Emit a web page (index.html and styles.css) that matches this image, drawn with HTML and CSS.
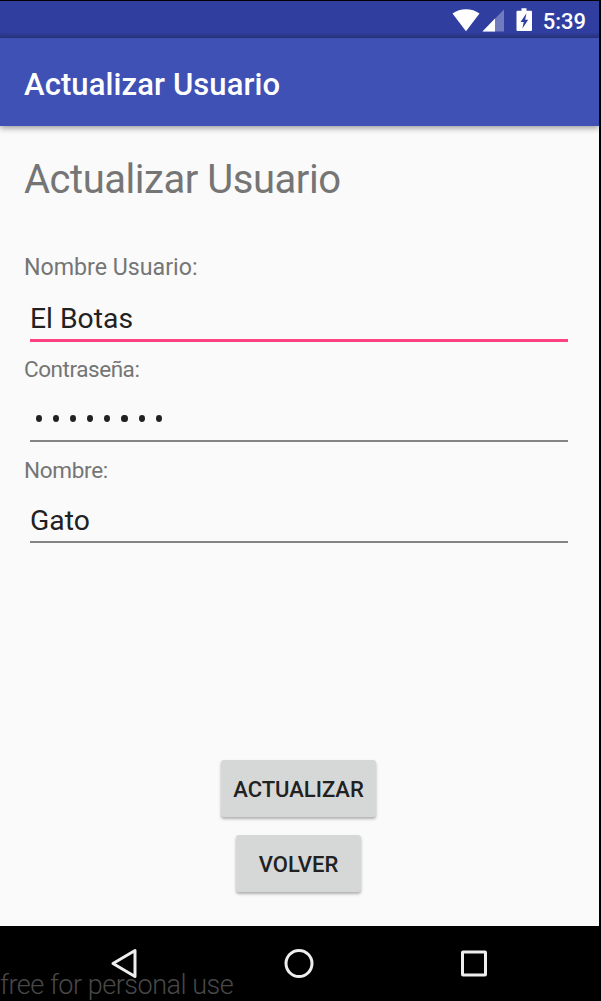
FILE: index.html
```html
<!DOCTYPE html>
<html lang="es">
<head>
<meta charset="utf-8">
<title>Actualizar Usuario</title>
<link rel="stylesheet" href="styles.css">
</head>
<body>
<div class="device">
  <header class="status">
    <svg class="status-icons" width="84" height="26" viewBox="0 0 84 26">
      <path fill="#fff" d="M0.5 12.6C8 6.8 20 6.8 27.5 12.6L14 30.3Z"/>
      <path fill="#727bbd" d="M52 8.500V30.500H30.500Z"/>
      <path fill="#fff" d="M43 17.500V30.500H30.500Z"/>
      <path fill="#fff" fill-rule="evenodd" d="M69.500 7.300h5v2.500h4.500q1 0 1 1V29q0 1-1 1h-13.500q-1 0-1-1V10.800q0-1 1-1h4zM74.500 12.300l-6 8.800h3.200l-1.300 6.500l5.800-8.800h-3z"/>
    </svg>
    <span class="clock">5:39</span>
  </header>
  <div class="appbar"><span class="appbar-title">Actualizar Usuario</span></div>
  <main class="content">
    <h1 class="heading">Actualizar Usuario</h1>
    <form class="form">
      <div class="label label-user">Nombre Usuario:</div>
      <div class="field field-active"><span class="value-user">El Botas</span></div>
      <div class="label label-pass">Contraseña:</div>
      <div class="field field-pass"><span class="dots"><i></i><i></i><i></i><i></i><i></i><i></i><i></i><i></i></span></div>
      <div class="label label-name">Nombre:</div>
      <div class="field field-name"><span class="value-name">Gato</span></div>
    </form>
    <div class="actions">
      <button class="btn btn-update"><span>ACTUALIZAR</span></button>
      <button class="btn btn-back"><span>VOLVER</span></button>
    </div>
  </main>
  <nav class="nav">
    <svg width="32" height="32" viewBox="0 0 32 32"><path d="M27 3.500V29.500L5 16.500Z"/></svg>
    <svg width="32" height="32" viewBox="0 0 32 32"><circle cx="16" cy="16.500" r="13"/></svg>
    <svg width="32" height="32" viewBox="0 0 32 32"><rect x="4.500" y="5" width="23" height="23" rx=".5"/></svg>
    <span class="watermark">free for personal use</span>
  </nav>
</div>
</body>
</html>
```
FILE: styles.css
```css
* { box-sizing: border-box; }
body { margin: 0; background: #000; font-family: Roboto, sans-serif; }
.device { width: 601px; height: 1001px; padding: 1px 2px 0 0; display: flex; flex-direction: column; overflow: hidden; }
.status { height: 37px; background: linear-gradient(#303f9f 0 31px, #2a3583 37px); display: flex; justify-content: flex-end; padding-right: 13px; }
.status-icons { overflow: visible; margin-right: 7px; }
.clock { font-size: 22px; font-weight: 500; line-height: 41px; color: #fff; }
.appbar { height: 88px; background: #3f51b5; display: flex; align-items: center; padding: 5px 0 0 24px; box-shadow: 0 2px 6px rgba(0,0,0,.4); position: relative; }
.appbar-title { color: #fff; font-size: 31px; font-weight: 500; letter-spacing: .1px; }
.content { height: 800px; background: #fafafa; display: flex; flex-direction: column; padding: 28px 31px 0 24px; }
.heading { margin: 0; font-size: 40px; font-weight: 400; line-height: 52px; letter-spacing: -.47px; color: #757575; }
.form { margin-top: 44px; }
.label { font-size: 23.200px; line-height: 34px; color: #757575; white-space: nowrap; }
.field { margin-left: 6px; height: 58px; border-bottom: 3px solid #ff4081; font-size: 28.300px; line-height: 70px; color: #212121; }
.label-pass { padding-top: 10px; height: 44px; font-size: 22.500px; letter-spacing: -.45px; }
.field-pass { height: 56px; border-bottom: 2px solid #848484; display: flex; }
.label-name { padding-top: 11px; height: 46px; font-size: 22.500px; letter-spacing: -.3px; }
.field-name { height: 55px; border-bottom: 2px solid #848484; line-height: 65px; }
.dots { display: flex; gap: 11px; padding: 29px 0 0 5.500px; }
.dots i { width: 6.200px; height: 7.200px; border-radius: 50%; background: #212121; }
.actions { margin-top: auto; padding: 0 0 34px 0; display: flex; flex-direction: column; align-items: center; gap: 18px; transform: translateX(3px); }
.btn { height: 57px; border: 0; border-radius: 3px; background: #d6d7d7; box-shadow: 0 2px 3px rgba(0,0,0,.3); font: 500 22px Roboto, sans-serif; color: #212121; padding: 1px 0 0; }
.btn-update { width: 155px; margin-right: 1px; }
.btn-back { width: 125px; margin-right: 1px; }
.nav { height: 75px; display: flex; gap: 143px; padding: 21px 0 0 108px; position: relative; }
.nav svg { flex: none; fill: none; stroke: #eee; stroke-width: 3; stroke-linejoin: round; }
.watermark { position: absolute; left: 0; top: 43px; font-size: 27px; line-height: 32px; font-weight: 300; letter-spacing: -.48px; color: #484848; white-space: nowrap; }
```
